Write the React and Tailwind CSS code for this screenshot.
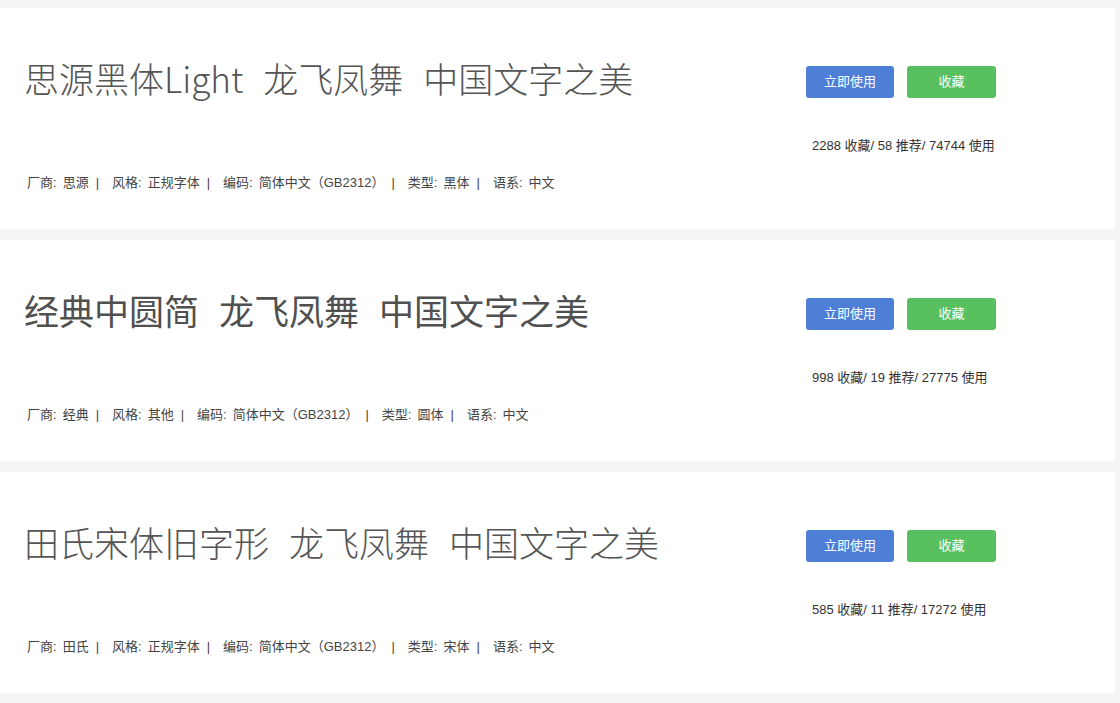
const fonts = [
  {
    title: ["思源黑体Light", "龙飞凤舞", "中国文字之美"],
    weight: "font-light text-[#555]",
    maker: "思源",
    style: "正规字体",
    kind: "黑体",
    stats: "2288 收藏/ 58 推荐/ 74744 使用",
  },
  {
    title: ["经典中圆简", "龙飞凤舞", "中国文字之美"],
    weight: "font-normal text-[#505050]",
    maker: "经典",
    style: "其他",
    kind: "圆体",
    stats: "998 收藏/ 19 推荐/ 27775 使用",
  },
  {
    title: ["田氏宋体旧字形", "龙飞凤舞", "中国文字之美"],
    weight: "font-light text-[#555]",
    maker: "田氏",
    style: "正规字体",
    kind: "宋体",
    stats: "585 收藏/ 11 推荐/ 17272 使用",
  },
];

function Sep() {
  return <span className="ml-[7px] mr-[13px]">|</span>;
}

function Meta({ label, value }) {
  return (
    <span>
      {label}:<span className="ml-[6px]">{value}</span>
    </span>
  );
}

function FontCard({ font }) {
  return (
    <div className="h-[221px] bg-white flex">
      {/* LEFT: sample + meta */}
      <div className="w-[806px] pl-6 flex flex-col">
        <h2
          className={`mt-[44px] text-[35px] leading-[52px] whitespace-nowrap font-['Noto_Sans_CJK_SC',sans-serif] ${font.weight}`}
        >
          {font.title.map((part, i) => (
            <span key={i} className={i > 0 ? "ml-[20px]" : ""}>
              {part}
            </span>
          ))}
        </h2>
        <p className="mt-[70px] ml-[3px] text-[13px] leading-[18px] text-[#444] whitespace-nowrap font-['Liberation_Sans','Noto_Sans_CJK_SC',sans-serif]">
          <Meta label="厂商" value={font.maker} />
          <Sep />
          <Meta label="风格" value={font.style} />
          <Sep />
          <Meta label="编码" value="简体中文（GB2312）" />
          <Sep />
          <Meta label="类型" value={font.kind} />
          <Sep />
          <Meta label="语系" value="中文" />
        </p>
      </div>

      {/* RIGHT: actions + stats */}
      <div className="flex flex-col font-['Liberation_Sans','Noto_Sans_CJK_SC',sans-serif]">
        <div className="mt-[58px] flex gap-[13px]">
          <button className="w-[88px] h-8 rounded-[3px] bg-[#4e7fd7] text-white text-[13px]">
            立即使用
          </button>
          <button className="w-[89px] h-8 rounded-[3px] bg-[#58c05e] text-white text-[13px]">
            收藏
          </button>
        </div>
        <p className="mt-[39px] pl-[6px] text-[13px] leading-[18px] text-[#333]">
          {font.stats}
        </p>
      </div>
    </div>
  );
}

export default function App() {
  return (
    <div className="min-h-screen bg-[#f5f5f5] pt-2">
      <div className="w-[1115px] flex flex-col gap-[11px]">
        {fonts.map((f) => (
          <FontCard key={f.maker} font={f} />
        ))}
      </div>
    </div>
  );
}
